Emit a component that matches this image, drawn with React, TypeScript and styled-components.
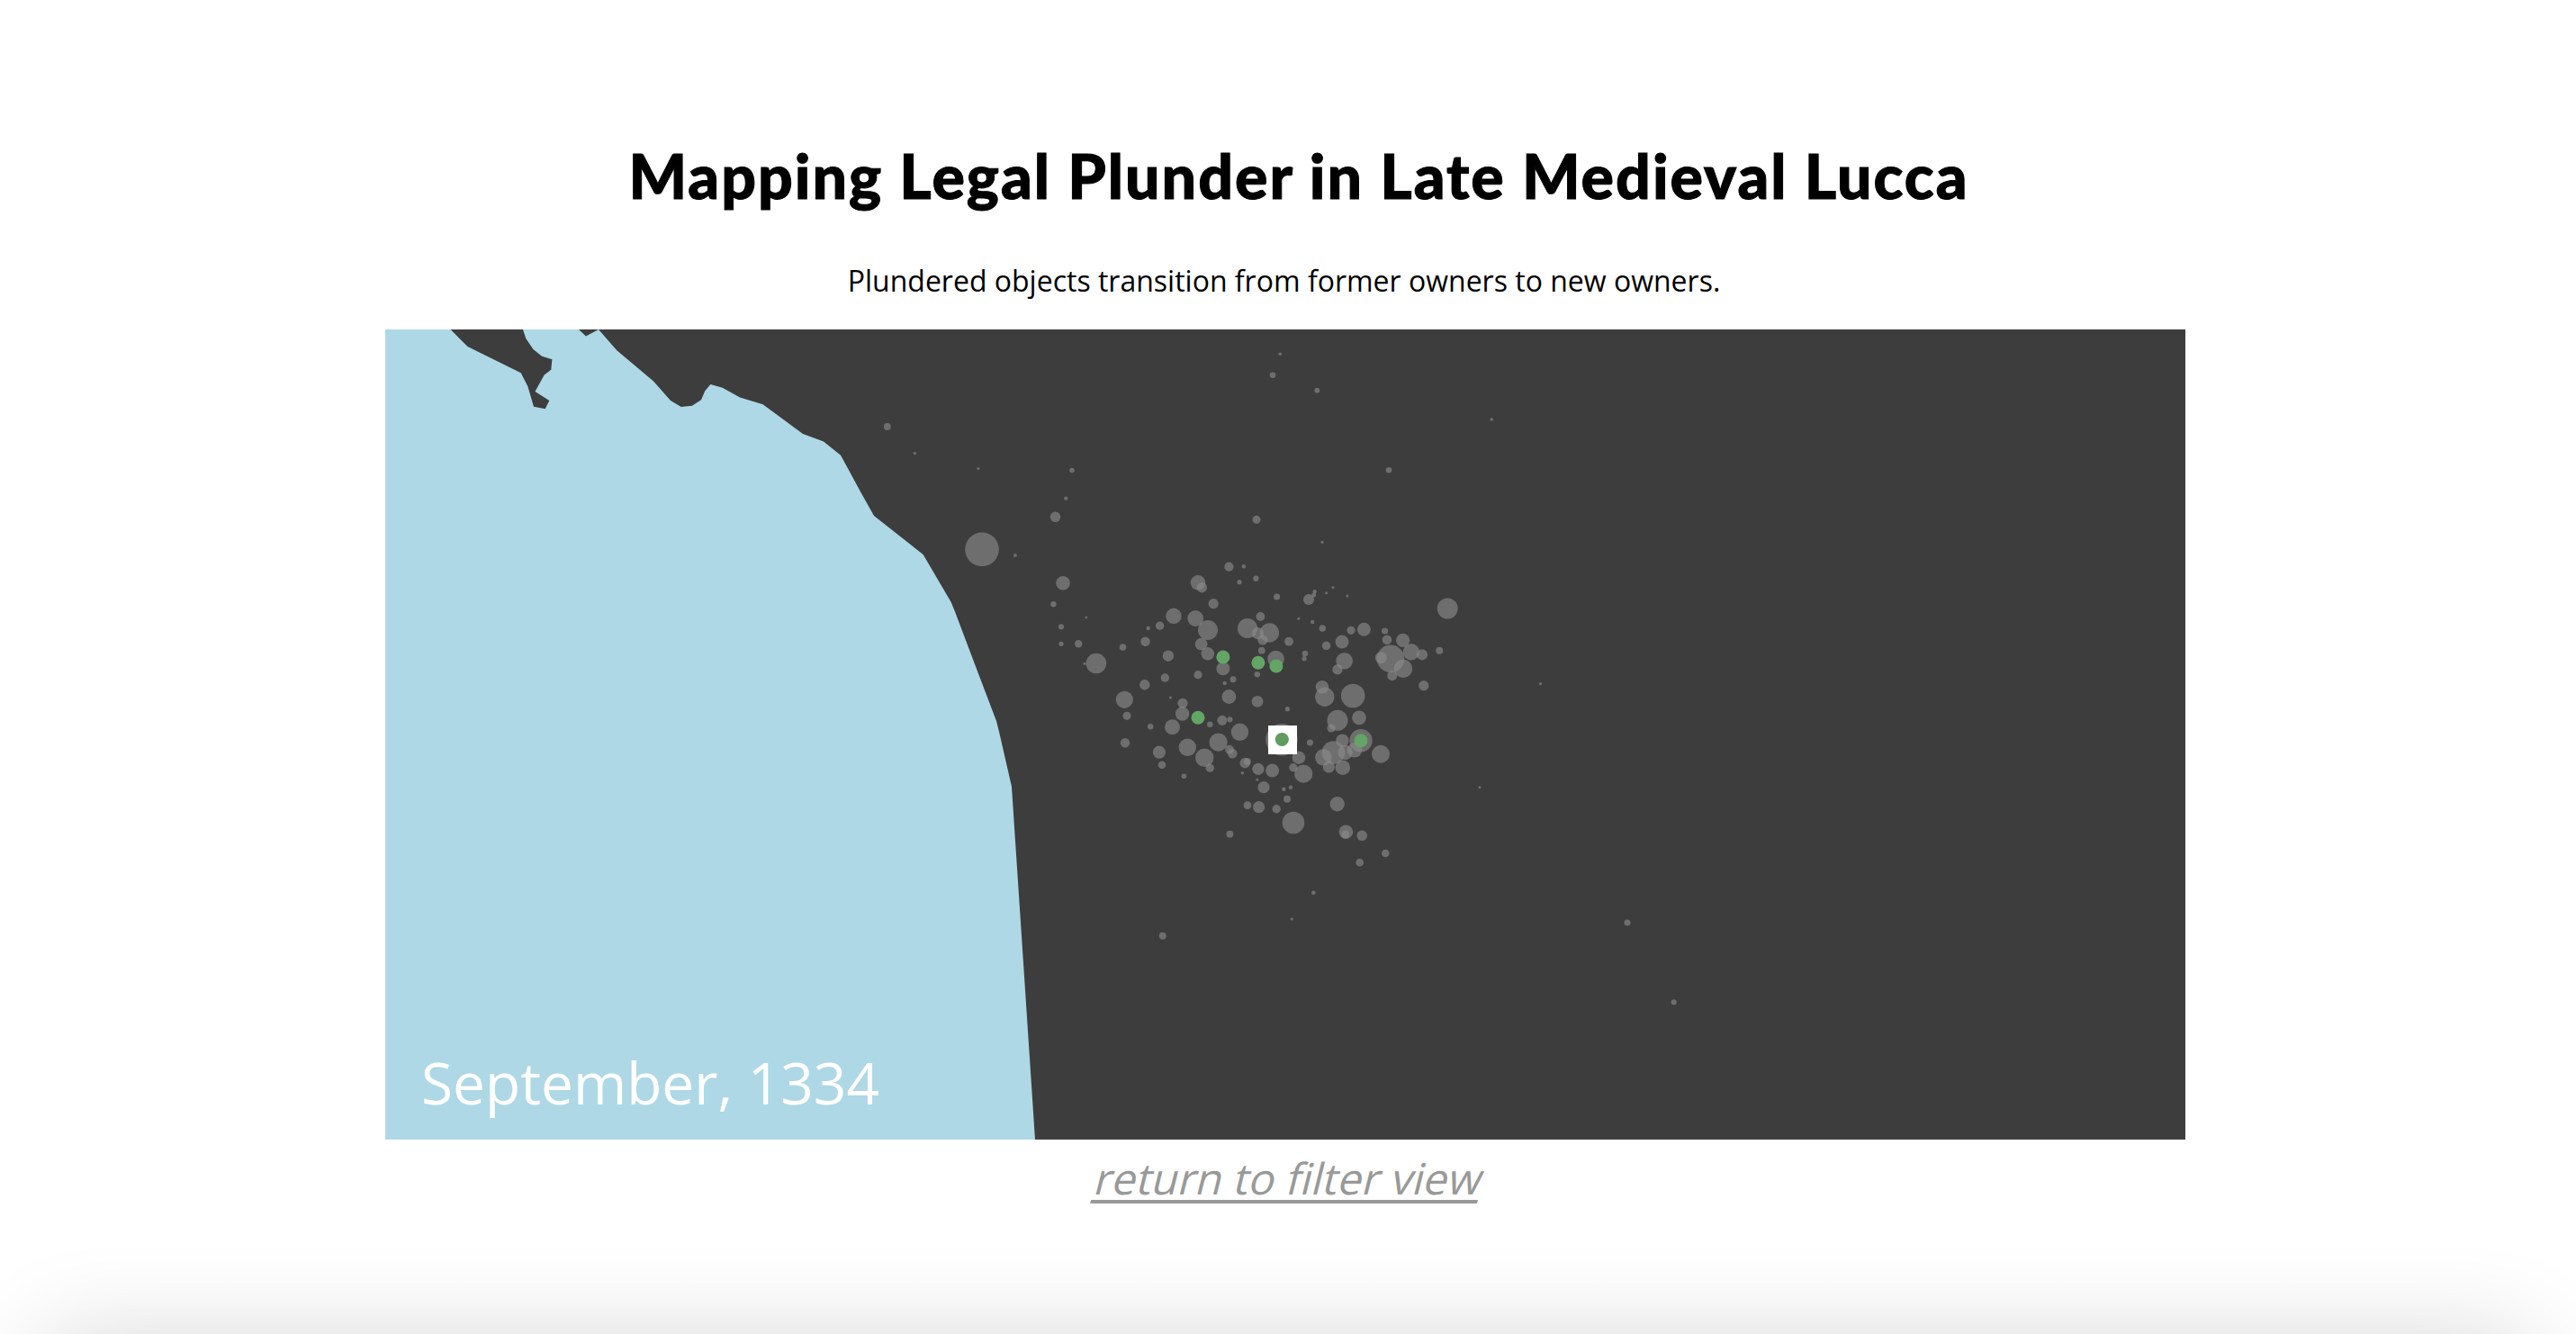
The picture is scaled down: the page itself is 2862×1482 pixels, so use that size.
import React from "react";
import styled, { createGlobalStyle } from "styled-components";

const GlobalStyle = createGlobalStyle`
	html, body {
		margin: 0;
		padding: 0;
		height: 1482px;
		overflow: hidden;
		background: #fff;
		font-family: "Open Sans", "Noto Sans", sans-serif;
	}
`;

const Page = styled.div`
	box-sizing: border-box;
	width: 100%;
	height: 1482px;
	padding-right: 6px;
	overflow: hidden;
	display: flex;
	flex-direction: column;
	align-items: center;
`;

const Title = styled.h1`
	margin: 0;
	padding: 153px 0 0 30px;
	font-family: "Lato", "Open Sans", sans-serif;
	font-size: 68px;
	line-height: 84px;
	font-weight: 900;
	letter-spacing: 2px;
	-webkit-text-stroke: 1px #000;
	color: #000;
`;

const Subtitle = styled.p`
	margin: 53px 3px 0 0;
	font-size: 32px;
	line-height: 44px;
	color: #000;
`;

const MapFrame = styled.div`
	position: relative;
	flex-shrink: 0;
	width: 2000px;
	height: 900px;
	margin-top: 32px;
	background: #aed8e6;
`;

const MapCanvas = styled.svg`
	display: block;
	width: 2000px;
	height: 900px;
`;

const DateLabel = styled.div`
	position: absolute;
	left: 40px;
	bottom: 19px;
	font-size: 64px;
	line-height: 88px;
	font-weight: 400;
	color: #fff;
`;

// the original is a slanted roman, not the true italic cut
const ReturnLink = styled.a`
	display: block;
	margin-top: 9px;
	font-size: 48px;
	line-height: 68px;
	color: #999;
	text-decoration: underline;
	text-decoration-thickness: 4px;
	text-decoration-skip-ink: none;
	text-underline-offset: 6px;
	transform: skewX(-14deg);
	transform-origin: 50% 80%;
`;

const BottomPanel = styled.div`
	flex-shrink: 0;
	align-self: flex-start;
	width: 2770px;
	height: 200px;
	margin: 144px 0 0 45px;
	border-radius: 20px;
	box-shadow: 0 0 110px rgba(0, 0, 0, 0.16);
`;

const Dot = styled.circle`
	fill: #8b8b8b;
	fill-opacity: 0.63;
`;

const Marker = styled.circle<{ $onWhite?: boolean }>`
	fill: ${({ $onWhite }) => ($onWhite ? "#5f9c61" : "#63a565")};
`;

const LAND =
	"72.6,0 91.5,19 150.7,48.3 158.3,63 165,85.8 177.7,88.3 182.3,79 166.5,69 176.7,50.4 184.3,44.7 185.4,33.3 174,29.7 164.4,21.9 156.3,10 153,0 " +
	"215,0 223,7.6 237,0 257.3,23.3 298,57.6 317,79 328.7,86 341,84.7 351,78.3 355.3,68.3 361.4,61 374.7,64.7 394,75.4 419.6,83.3 464,116 487,124.4 506,139.7 " +
	"528.7,181.5 543,207 597.6,250 628.7,303 632.8,313 656,374.4 679,435 681.8,446 696,508 722,900 2000,900 2000,0";

// page coordinates: x, y, radius
const DOTS: [number, number, number][] = [
	[1422.3, 393.3, 1.5], [1414, 416.7, 3], [1463.3, 433.7, 2.6], [1657.3, 466, 1.5], [1543, 522.3, 3],
	[1396, 577.3, 4.2], [1469, 602.3, 1.3], [985.8, 474, 3.6], [1016.4, 503.6, 1.4], [1086.8, 520.4, 1.2],
	[1191, 522.5, 2.4], [1184.3, 553.6, 1.9], [1172.5, 574.3, 5.5], [1091, 610.4, 18.5], [1127.9, 617, 1.6],
	[1181, 647.7, 7.5], [1170.4, 671.3, 2.9], [1179, 696.3, 2.8], [1179, 715.3, 2.3], [1198.2, 715.3, 3.9],
	[1206.8, 686, 1.1], [1217.9, 737, 11], [1205, 737.3, 1.2], [1247.5, 719, 3.5], [1272.5, 712.7, 5],
	[1275.7, 698, 1.9], [1288.6, 695.3, 4.4], [1304, 684.3, 8.4], [1328.2, 687, 8.6], [1342, 700, 10.7],
	[1331, 647.3, 8], [1335.4, 652.7, 5.4], [1348.2, 670.7, 5.3], [1365.4, 629.7, 4.8], [1381.8, 629.3, 1.9],
	[1377, 646.7, 2.3], [1395.4, 642.7, 2.8], [1418.6, 663, 3.3], [1400.4, 685, 4.6], [1386, 698, 10.8],
	[1397.5, 703.7, 6.3], [1410.4, 703, 10.4], [1402.9, 711, 5.3], [1432, 712.7, 4.6], [1401.8, 722.7, 3.6],
	[1334.6, 715.7, 6.6], [1341.8, 726.3, 7], [1297.9, 728.7, 5.9], [1417.5, 732, 9], [1358.9, 742.7, 7.2],
	[1396.8, 749.3, 2.9], [1331, 749.7, 4.3], [1294.3, 753, 4.4], [1271.8, 760.7, 5.4], [1370, 754.7, 3.2],
	[1360.7, 759, 1.9], [1300.4, 775, 1.2], [1249.3, 777.3, 9.3], [1365.4, 774, 7.6], [1397, 779.3, 6.1],
	[1430.4, 787.7, 2.3], [1314, 781.3, 5.3], [1313.6, 793, 7.4], [1252, 795.3, 4.2], [1278.2, 807.3, 2.9],
	[1302.5, 807.7, 8.2], [1344.3, 804.7, 2.9], [1357.9, 800.3, 5.2], [1366.4, 799.3, 2.8], [1377.5, 813.3, 9.4],
	[1353.6, 824.7, 9.8], [1250, 825.3, 4.9], [1287.9, 835.7, 6.8], [1319.3, 830.3, 9.4], [1366, 832.7, 4.6],
	[1369.3, 837.3, 5], [1338.2, 841.7, 9.9], [1291, 849.7, 4], [1344.3, 853.3, 4.4], [1315.4, 862.3, 2.4],
	[1383.2, 847.7, 5.4], [1386, 846, 3.6], [1380.4, 858.7, 1.5], [1397.9, 854.3, 6.3], [1413.6, 856, 7.2],
	[1396.8, 866.3, 1.2], [1404, 874.7, 6.3], [1426.4, 876.7, 1.9], [1434, 874.7, 1.9], [1430, 887.7, 3.7],
	[1386, 894.7, 4.1], [1398.6, 896.7, 6.3], [1418.2, 898.7, 4.4], [1437, 914, 12], [1366.4, 926.7, 3.6],
	[1485.7, 893.3, 7.9], [1495.4, 924.3, 7.5], [1494.6, 927, 4.2], [1513.2, 928.3, 5.5], [1539.3, 948, 4],
	[1510.7, 958.3, 4], [1424, 821.7, 17.5], [1442.9, 841.7, 7], [1436.8, 852.7, 4.3], [1448.2, 859.7, 9.8],
	[1455.4, 825, 3.2], [1470.4, 841.3, 9], [1481.4, 836, 12.5], [1494.6, 836, 8], [1491.4, 822.7, 6.9],
	[1476.4, 852, 6.3], [1491.8, 852.7, 8], [1505, 833.3, 8], [1512, 822.7, 12.4], [1534, 837.7, 9.7],
	[1486, 800.3, 11.2], [1479, 809, 4.3], [1510, 797.3, 7.6], [1471.8, 774.3, 10.4], [1469, 763.3, 7],
	[1503.2, 773, 13], [1581.8, 761.7, 5.3], [1486, 743.7, 5.4], [1493.6, 734.3, 9], [1450, 726, 3],
	[1449, 731.7, 2.3], [1473.6, 717.3, 4.5], [1491, 713, 7.2], [1501, 700.3, 4.3], [1515.4, 699.3, 7.2],
	[1469.3, 698, 3.4], [1458.2, 691, 1.9], [1442.9, 687.3, 1.2], [1454, 666, 5.7], [1459.6, 661, 2.2],
	[1460.7, 657.3, 1.9], [1473.6, 658.7, 1.2], [1481, 652.7, 1.2], [1496.8, 662, 1.2], [1538.6, 701, 3.3],
	[1541, 710.7, 5], [1558.6, 711.3, 7.3], [1567.9, 724.3, 8.9], [1580, 727.3, 5.8], [1599.3, 722.7, 3.7],
	[1545, 731.7, 15], [1534.3, 730.7, 6.2], [1558.9, 742.7, 10], [1546.8, 750.7, 5.2], [1608.2, 676, 11.2],
	[1644, 874.7, 1.2], [1711.5, 759.7, 1.3], [1459.3, 991.7, 2], [1435.3, 1021, 1.3], [1291.7, 1039.7, 3.7],
	[1808, 1025, 3.2], [1859.7, 1113.3, 2.8],
];

const MARKERS: [number, number][] = [
	[1358.9, 730],
	[1397.9, 736.3],
	[1417.9, 740],
	[1331, 797.3],
	[1512, 822.7],
];

const App = () => (
	<>
		<GlobalStyle />
		<Page>
			<Title>Mapping Legal Plunder in Late Medieval Lucca</Title>
			<Subtitle>Plundered objects transition from former owners to new owners.</Subtitle>
			<MapFrame>
				<MapCanvas viewBox="0 0 2000 900">
					<polygon points={LAND} fill="#3d3d3d" />
					<g transform="translate(-428 -366)">
						{DOTS.map(([x, y, r]) => (
							<Dot key={`${x}-${y}`} cx={x} cy={y} r={r + 0.3} />
						))}
						{MARKERS.map(([x, y]) => (
							<Marker key={x} cx={x} cy={y} r={7.5} />
						))}
						<rect x={1409} y={806} width={32} height={32} fill="#fff" />
						<Marker $onWhite cx={1424.3} cy={821.5} r={7.6} />
					</g>
				</MapCanvas>
				<DateLabel>September, 1334</DateLabel>
			</MapFrame>
			<ReturnLink href="#">return to filter view</ReturnLink>
			<BottomPanel />
		</Page>
	</>
);

export default App;
